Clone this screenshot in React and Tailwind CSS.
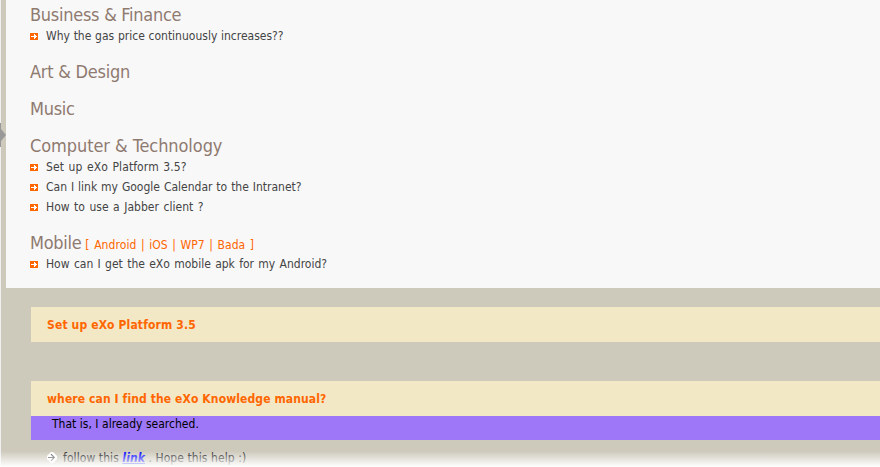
function BulletIcon() {
  return (
    <svg width="8" height="7" viewBox="0 0 8 7" shapeRendering="crispEdges" className="mt-px shrink-0">
      <rect width="8" height="7" fill="#ff6600" />
      <path d="M1 3h3V1h1v1h1v1h1v1h-1v1h-1v1h-1V4H1z" fill="#fff" />
    </svg>
  );
}

function AnswerIcon() {
  return (
    <svg width="10" height="11" viewBox="0 0 10 11" className="-mt-0.5 shrink-0">
      <path d="M4 0h2l4 4v3l-4 4H4L0 7V4z" fill="#fff" />
      <path d="M1 5.5h6M4 2.2l3.3 3.3L4 8.8" fill="none" stroke="#555" strokeWidth="1.1" />
    </svg>
  );
}

const categories = [
  {
    name: "Business & Finance",
    spacing: "tracking-[-0.27px]",
    questions: [{ text: "Why the gas price continuously increases??", spacing: "[word-spacing:0.3px]" }],
  },
  { name: "Art & Design", spacing: "tracking-[-0.24px]", questions: [] },
  { name: "Music", spacing: "tracking-[-0.3px]", questions: [] },
  {
    name: "Computer & Technology",
    spacing: "tracking-[-0.07px]",
    questions: [
      { text: "Set up eXo Platform 3.5?", spacing: "tracking-[0.1px] [word-spacing:1px]" },
      { text: "Can I link my Google Calendar to the Intranet?", spacing: "[word-spacing:0.5px]" },
      { text: "How to use a Jabber client ?", spacing: "tracking-[0.03px] [word-spacing:1px]" },
    ],
  },
  {
    name: "Mobile",
    spacing: "tracking-[-0.3px]",
    tags: "[ Android | iOS | WP7 | Bada ]",
    questions: [{ text: "How can I get the eXo mobile apk for my Android?", spacing: "[word-spacing:0.9px]" }],
  },
];

function Category({ name, spacing, tags, questions }) {
  return (
    <section>
      <h2 className={`flex h-[22px] items-baseline text-[18px] leading-[22px] text-[#8f7a70] ${spacing}`}>
        {name}
        {tags && (
          <span className="ml-1 text-[12px] tracking-[0.08px] text-[#ff6600] [word-spacing:1px]">{tags}</span>
        )}
      </h2>
      <ul>
        {questions.map((q) => (
          <li key={q.text} className="flex h-5 items-center gap-2">
            <BulletIcon />
            <span className={q.spacing}>{q.text}</span>
          </li>
        ))}
      </ul>
    </section>
  );
}

export default function App() {
  return (
    <div className="relative flex h-[467px] w-full overflow-hidden bg-[#cdc9bb] font-['DejaVu_Sans_Condensed','DejaVu_Sans',sans-serif] text-[12px] leading-5 whitespace-nowrap text-[#444]">
      <div className="mr-[5px] w-px shrink-0 bg-[#f0f0f0]" />
      <main className="min-w-0 flex-1">
        <div className="flex h-[288px] flex-col gap-[15px] bg-[#f8f8f8] pt-1 pl-6">
          {categories.map((c) => (
            <Category key={c.name} {...c} />
          ))}
        </div>
        <div className="pt-[19px] pl-[25px]">
          <h3 className="flex h-[35px] items-center bg-[#f3e8c6] pl-4 font-bold tracking-[0.14px] text-[#ff6600]">
            Set up eXo Platform 3.5
          </h3>
          <h3 className="mt-[39px] flex h-[35px] items-center bg-[#f3e8c6] pl-4 font-bold tracking-[0.11px] text-[#ff6600]">
            where can I find the eXo Knowledge manual?
          </h3>
          <p className="h-6 bg-[#9d77f8] pl-[21px] leading-4 tracking-[0.02px] text-black">
            That is, I already searched.
          </p>
          <div className="mt-2 flex h-5 items-center gap-[6px] pl-4">
            <AnswerIcon />
            <p className="tracking-[0.08px] text-[#222]">
              follow this <a className="font-bold italic text-[#0000ff] underline">link</a> . Hope this help :)
            </p>
          </div>
        </div>
      </main>
      <svg width="6" height="24" viewBox="0 0 6 24" className="absolute top-[123px] left-0">
        <path d="M0 0h1v6l5 6-5 6v6H0z" fill="#999" />
      </svg>
      <div className="absolute inset-x-0 bottom-0 h-4 bg-linear-to-b from-white/0 to-white" />
    </div>
  );
}
